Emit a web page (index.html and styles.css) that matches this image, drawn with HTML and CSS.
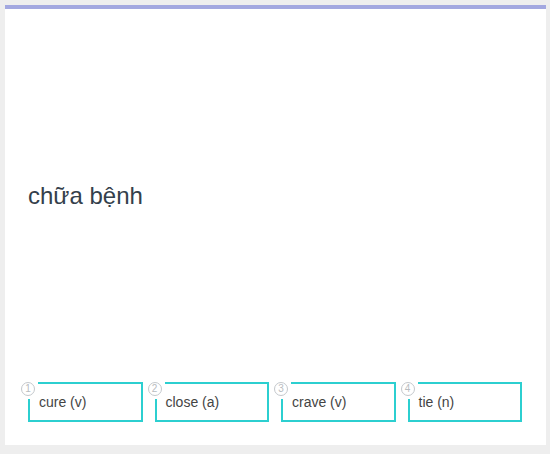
FILE: index.html
```html
<!DOCTYPE html>
<html>
<head>
<meta charset="utf-8">
<link rel="stylesheet" href="styles.css">
</head>
<body>
<div class="card">
  <div class="prompt">chữa bệnh</div>
  <div class="options">
    <div class="option"><span class="num"><span class="circle">1</span></span><span class="label">cure (v)</span></div>
    <div class="option"><span class="num"><span class="circle">2</span></span><span class="label">close (a)</span></div>
    <div class="option"><span class="num"><span class="circle">3</span></span><span class="label">crave (v)</span></div>
    <div class="option"><span class="num"><span class="circle">4</span></span><span class="label">tie (n)</span></div>
  </div>
</div>
</body>
</html>
```
FILE: styles.css
```css
html, body {
  margin: 0;
  padding: 0;
  background: #eeeeee;
}
body {
  padding: 5px 4px 9px 5px;
  font-family: "Liberation Sans", Arial, sans-serif;
}
.card {
  background: #ffffff;
  border-top: 4px solid #a3a8e0;
  height: 440px;
  box-sizing: border-box;
  display: flex;
  flex-direction: column;
  padding: 0 24px 23px 23px;
}
.prompt {
  padding-top: 173px;
  font-size: 24px;
  color: #34404b;
}
.options {
  margin-top: auto;
  display: grid;
  grid-template-columns: repeat(4, 1fr);
  gap: 12px;
}
.option {
  position: relative;
  height: 40px;
  border: 2px solid #2ccfd0;
  box-sizing: border-box;
  display: flex;
  align-items: center;
  padding-left: 9px;
}
.label {
  font-size: 14px;
  color: #444;
}
.num {
  position: absolute;
  left: -9px;
  top: -2px;
  width: 17px;
  height: 17px;
  background: #fff;
}
.circle {
  position: absolute;
  left: 0;
  top: 0;
  width: 12px;
  height: 12px;
  border: 1.5px solid #c4c8cc;
  border-radius: 50%;
  font-size: 10px;
  line-height: 12px;
  text-align: center;
  color: #b8bcc0;
}
```
